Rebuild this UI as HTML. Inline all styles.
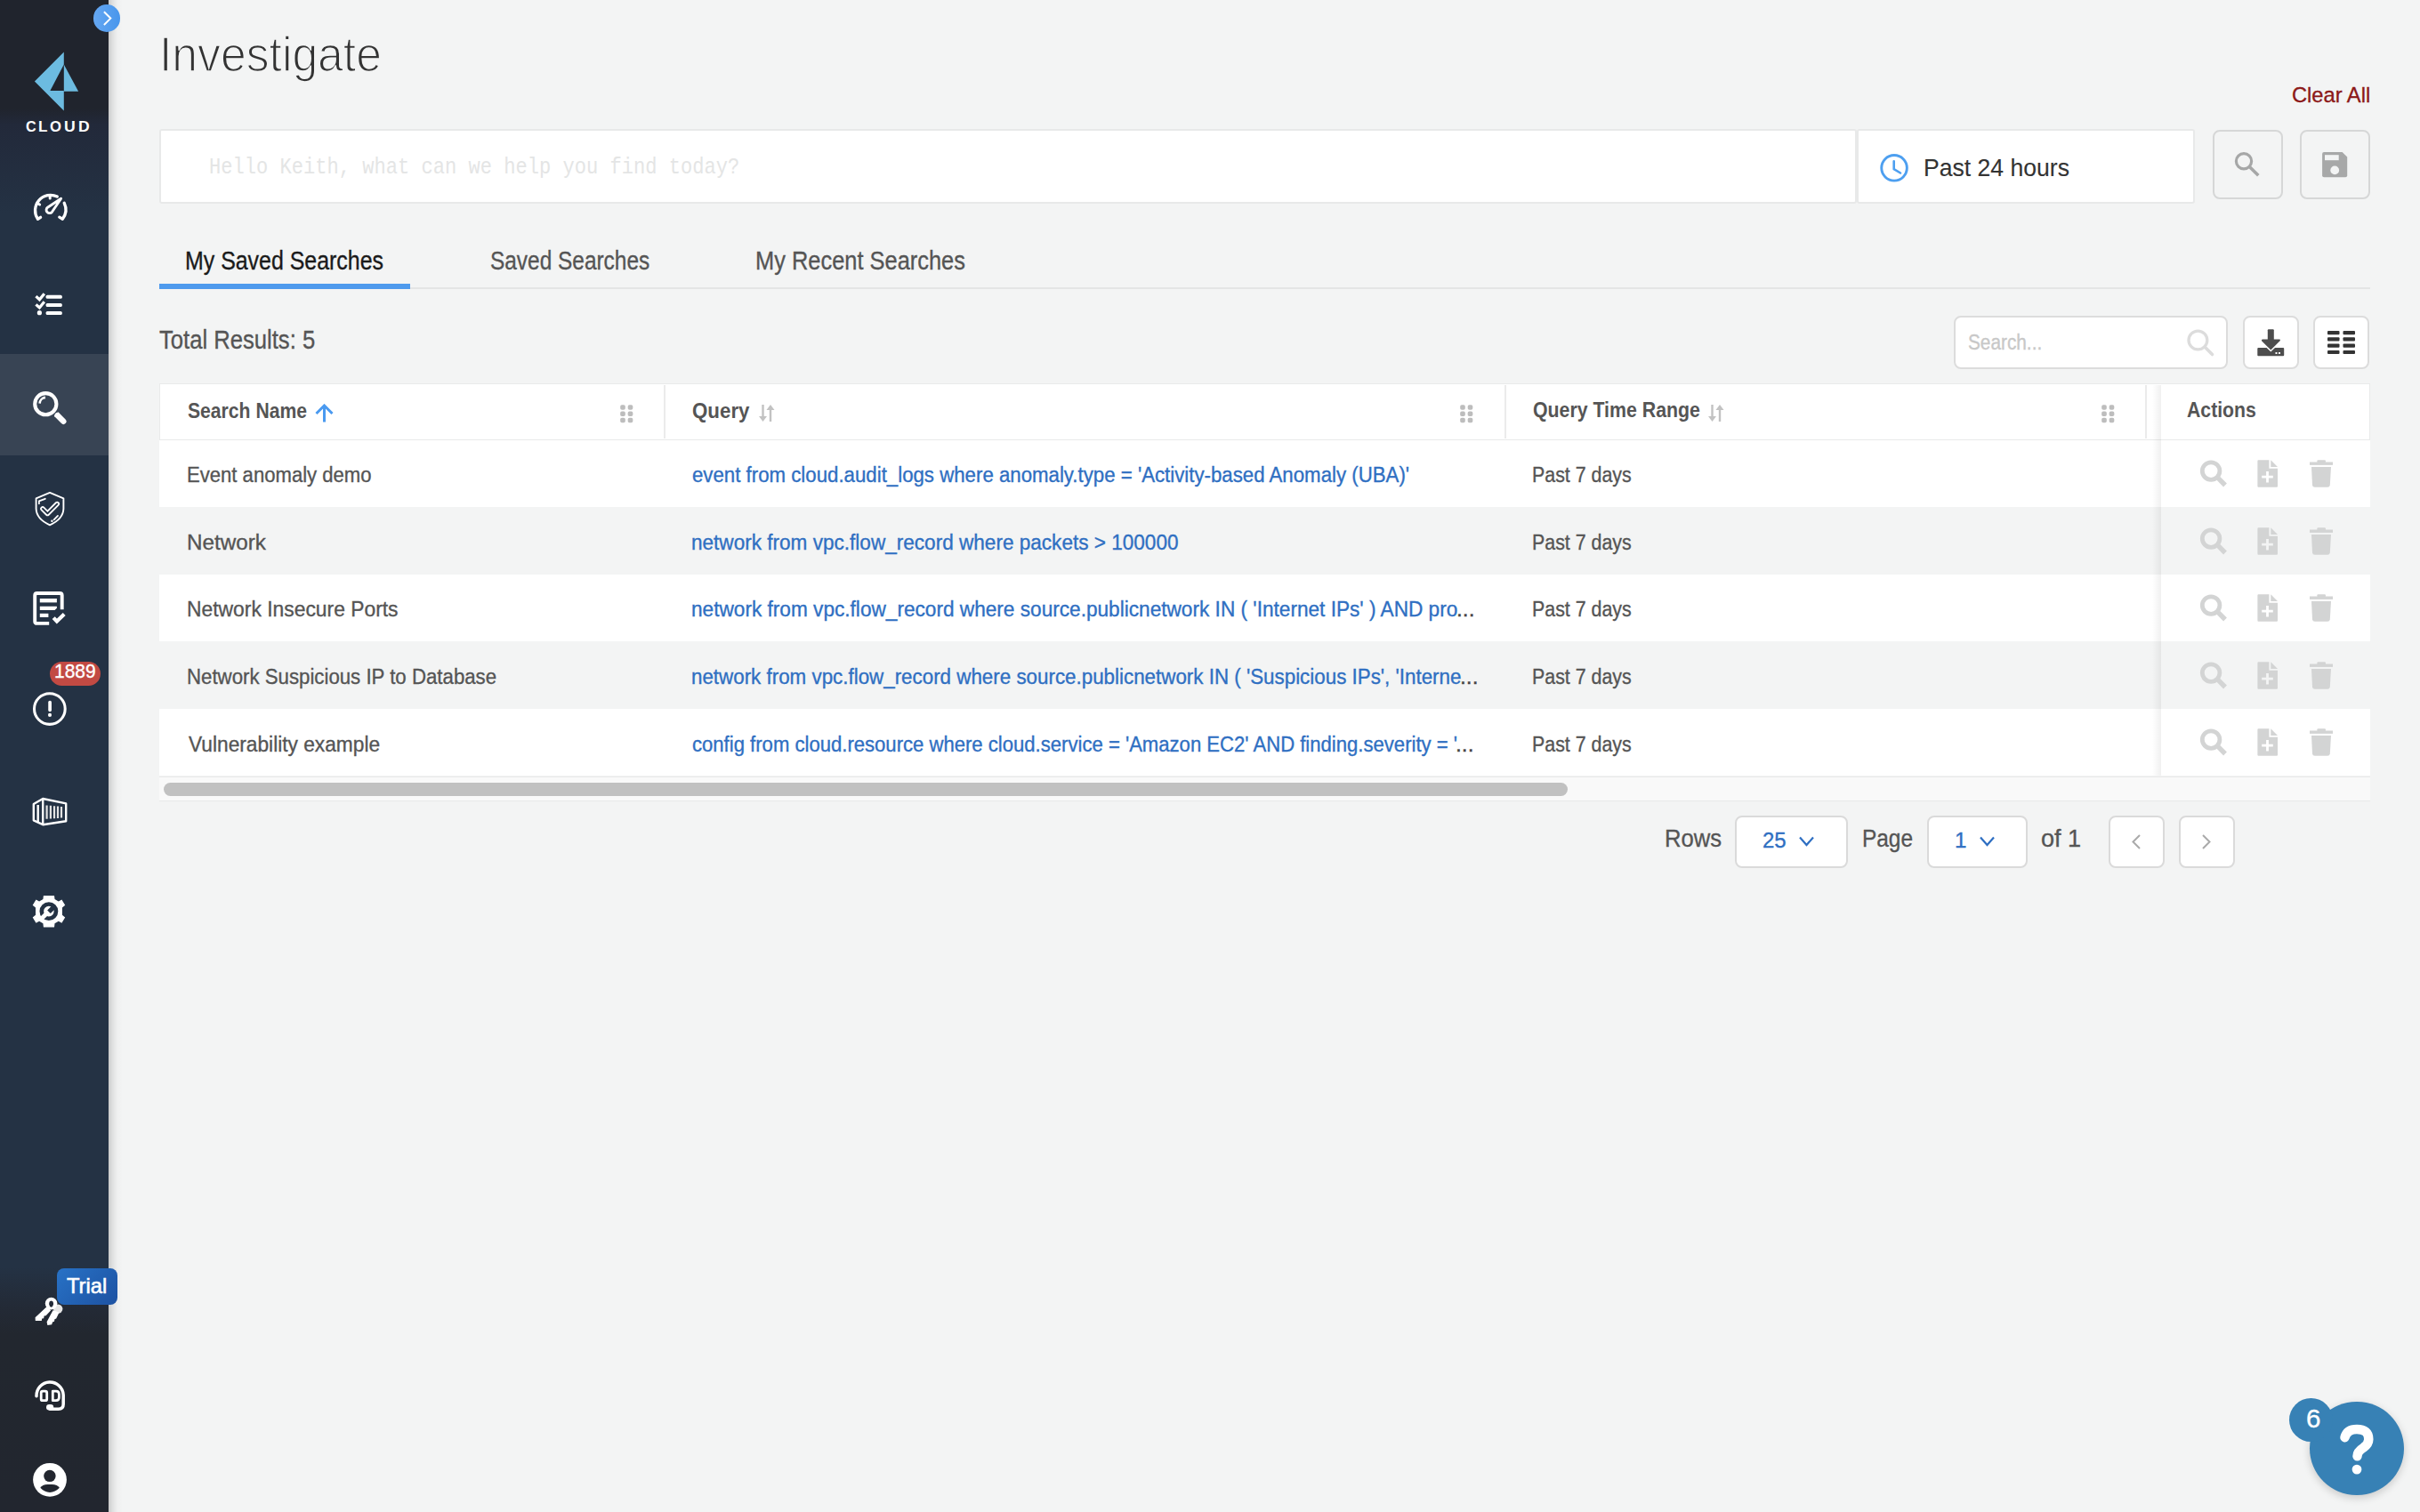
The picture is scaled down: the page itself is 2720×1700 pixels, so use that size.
<!DOCTYPE html><html><head><meta charset="utf-8"><style>
html,body{margin:0;padding:0;}
body{width:2720px;height:1700px;position:relative;overflow:hidden;background:#f3f4f4;font-family:"Liberation Sans",sans-serif;}
.t{position:absolute;white-space:nowrap;transform-origin:0 0;}
.a{position:absolute;}
</style></head><body>
<div class="a" style="left:0;top:0;width:122px;height:1700px;background:linear-gradient(180deg,#20242d 0px,#20242d 122px,#22293a 140px,#243244 240px,#243244 1425px,#232a36 1470px,#22272f 1500px,#22262f 1700px);"></div>
<div class="a" style="left:122px;top:0;width:16px;height:1700px;background:linear-gradient(90deg,rgba(0,0,0,0.17),rgba(0,0,0,0.09) 25%,rgba(0,0,0,0.02) 60%,rgba(0,0,0,0));"></div>
<div class="a" style="left:0;top:398.4px;width:122px;height:113.5px;background:#384454;"></div>
<div class="a" style="left:105px;top:5.2px;width:30.4px;height:30.4px;border-radius:50%;background:linear-gradient(90deg,#65a7f2,#4896ec);"></div>
<svg class="a" style="left:100px;top:0px" width="40" height="40" viewBox="100 0 40 40"><path d="M116.9 13.2 L124.3 20.6 L116.9 28" fill="none" stroke="#fff" stroke-width="2"/></svg>
<svg class="a" style="left:0;top:0" width="122" height="160" viewBox="0 0 122 160"><path d="M71.8 58.4 L38.9 91.4 L71.8 124.5 L71.8 101.9 L56.4 101.9 L71.8 72.5 Z" fill="#6cbbe0"/><path d="M71.8 72.5 L88.1 102.7 L71.8 102.7 Z" fill="#6cbbe0"/></svg>
<div class="t" style="left:28.65px;top:134.33px;font-size:16.13px;line-height:16.13px;font-family:'Liberation Sans', sans-serif; font-weight:bold;color:#fff;transform:scaleX(1.0031);">C</div>
<div class="t" style="left:43.39px;top:134.33px;font-size:16.13px;line-height:16.13px;font-family:'Liberation Sans', sans-serif; font-weight:bold;color:#fff;transform:scaleX(1.0591);">L</div>
<div class="t" style="left:56.03px;top:134.33px;font-size:16.13px;line-height:16.13px;font-family:'Liberation Sans', sans-serif; font-weight:bold;color:#fff;transform:scaleX(1.0345);">O</div>
<div class="t" style="left:72.04px;top:134.33px;font-size:16.13px;line-height:16.13px;font-family:'Liberation Sans', sans-serif; font-weight:bold;color:#fff;transform:scaleX(1.0950);">U</div>
<div class="t" style="left:87.96px;top:134.33px;font-size:16.13px;line-height:16.13px;font-family:'Liberation Sans', sans-serif; font-weight:bold;color:#fff;transform:scaleX(1.0885);">D</div>
<div class="t" style="left:178.95px;top:33.23px;font-size:55.81px;line-height:55.81px;font-family:'Liberation Sans', sans-serif;color:#333;transform:scaleX(0.9263);-webkit-text-stroke:1.6px #f3f4f4;">Investigate</div>
<div class="t" style="left:2576.12px;top:94.57px;font-size:24.71px;line-height:24.71px;font-family:'Liberation Sans', sans-serif;color:#8c1818;transform:scaleX(0.9587);-webkit-text-stroke:0.35px #8c1818;">Clear All</div>
<div class="a" style="left:178.9px;top:145.1px;width:1908.4px;height:83.5px;background:#fff;border:2px solid #e8e9e9;border-radius:3px;box-sizing:border-box;"></div>
<div class="t" style="left:234.63px;top:175.66px;font-size:25.64px;line-height:25.64px;font-family:'Liberation Mono', monospace;color:#e4e5e5;transform:scaleX(0.8616);">Hello Keith, what can we help you find today?</div>
<div class="a" style="left:2086.6px;top:145.1px;width:380.7px;height:83.5px;background:#fff;border:2px solid #e8e9e9;border-radius:3px;box-sizing:border-box;"></div>
<svg class="a" style="left:2100px;top:160px" width="60" height="55" viewBox="2100 160 60 55"><circle cx="2129.05" cy="188.85" r="14.3" fill="none" stroke="#4d9ff0" stroke-width="2.9"/><path d="M2128.7 181.3 V190.2 L2136 194.5" fill="none" stroke="#4d9ff0" stroke-width="2.6" stroke-linecap="round" stroke-linejoin="round"/></svg>
<div class="t" style="left:2162.27px;top:174.84px;font-size:28.05px;line-height:28.05px;font-family:'Liberation Sans', sans-serif;color:#333;transform:scaleX(0.9473);-webkit-text-stroke:0.1px #333;">Past 24 hours</div>
<div class="a" style="left:2487px;top:146px;width:78.5px;height:78px;border:2px solid #d6d7d7;border-radius:8px;box-sizing:border-box;background:#f3f4f4;"></div>
<div class="a" style="left:2585.2px;top:146px;width:78.5px;height:78px;border:2px solid #d6d7d7;border-radius:8px;box-sizing:border-box;background:#f3f4f4;"></div>
<svg class="a" style="left:2490px;top:150px" width="170" height="75" viewBox="2490 150 170 75"><circle cx="2522" cy="181.2" r="8.6" fill="none" stroke="#a6a7a7" stroke-width="3.2"/><path d="M2528.6 187.8 L2538.3 197.3" stroke="#a6a7a7" stroke-width="3.6"/><path d="M2612.1 171 L2632.6 171 L2638.2 176.6 L2638.2 197.2 Q2638.2 199.2 2636.2 199.2 L2612.1 199.2 Q2610.1 199.2 2610.1 197.2 L2610.1 173 Q2610.1 171 2612.1 171 Z" fill="#a7a8a8"/><rect x="2613" y="174.2" width="15.7" height="6" fill="#f3f4f4"/><circle cx="2624.2" cy="191.4" r="4.9" fill="#f3f4f4"/></svg>
<div class="t" style="left:207.61px;top:277.81px;font-size:29.51px;line-height:29.51px;font-family:'Liberation Sans', sans-serif;color:#1a1a1a;transform:scaleX(0.8447);-webkit-text-stroke:0.35px #1a1a1a;">My Saved Searches</div>
<div class="t" style="left:550.60px;top:277.81px;font-size:29.51px;line-height:29.51px;font-family:'Liberation Sans', sans-serif;color:#555;transform:scaleX(0.8277);-webkit-text-stroke:0.35px #555;">Saved Searches</div>
<div class="t" style="left:848.97px;top:277.81px;font-size:29.51px;line-height:29.51px;font-family:'Liberation Sans', sans-serif;color:#555;transform:scaleX(0.8616);-webkit-text-stroke:0.35px #555;">My Recent Searches</div>
<div class="a" style="left:179px;top:323.2px;width:2484.9px;height:1.8px;background:#e4e5e5;"></div>
<div class="a" style="left:179px;top:318.9px;width:281.6px;height:6.1px;background:#4e9aed;"></div>
<div class="t" style="left:178.89px;top:366.73px;font-size:29.36px;line-height:29.36px;font-family:'Liberation Sans', sans-serif;color:#555;transform:scaleX(0.8727);-webkit-text-stroke:0.35px #555;">Total Results: 5</div>
<div class="a" style="left:2196px;top:355px;width:308px;height:60px;border:2px solid #dcdcdc;border-radius:8px;box-sizing:border-box;background:#fff;"></div>
<div class="t" style="left:2211.66px;top:372.99px;font-size:23.98px;line-height:23.98px;font-family:'Liberation Sans', sans-serif;color:#c8c8c8;transform:scaleX(0.8674);-webkit-text-stroke:0.35px #c8c8c8;">Search...</div>
<svg class="a" style="left:2450px;top:360px" width="50" height="50" viewBox="2450 360 50 50"><circle cx="2470.4" cy="382.5" r="10.4" fill="none" stroke="#dcdcdc" stroke-width="3.3"/><path d="M2478 390 L2486.5 398.5" stroke="#dcdcdc" stroke-width="3.6" stroke-linecap="round"/></svg>
<div class="a" style="left:2521px;top:355px;width:63px;height:60px;border:2px solid #dcdcdc;border-radius:8px;box-sizing:border-box;background:#fff;"></div>
<div class="a" style="left:2600px;top:355px;width:63px;height:60px;border:2px solid #dcdcdc;border-radius:8px;box-sizing:border-box;background:#fff;"></div>
<svg class="a" style="left:2530px;top:365px" width="45" height="40" viewBox="2530 365 45 40"><rect x="2548.8" y="370.2" width="7" height="13" rx="1" fill="#4d4d4d"/><path d="M2543 381.6 L2562.2 381.6 Q2563.5 382 2562.6 383.2 L2552.3 393.4 L2542 383.2 Q2541.6 382 2543 381.6 Z" fill="#4d4d4d"/><path d="M2538.3 391 L2547.6 391 L2552.3 395.6 L2557 391 L2566.2 391 Q2567.2 391 2567.2 392 L2567.2 399.3 Q2567.2 400.3 2566.2 400.3 L2538.3 400.3 Q2537.3 400.3 2537.3 399.3 L2537.3 392 Q2537.3 391 2538.3 391 Z" fill="#4d4d4d"/><rect x="2557.5" y="396" width="2" height="2" fill="#fff"/><rect x="2561" y="396" width="2" height="2" fill="#fff"/></svg>
<svg class="a" style="left:2616px;top:372px" width="32" height="27" viewBox="0 0 32 27"><rect x="0" y="0.0" width="13.5" height="4.2" rx="1" fill="#333"/><rect x="17.5" y="0.0" width="13.5" height="4.2" rx="1" fill="#333"/><rect x="0" y="7.3" width="13.5" height="4.2" rx="1" fill="#333"/><rect x="17.5" y="7.3" width="13.5" height="4.2" rx="1" fill="#333"/><rect x="0" y="14.6" width="13.5" height="4.2" rx="1" fill="#333"/><rect x="17.5" y="14.6" width="13.5" height="4.2" rx="1" fill="#333"/><rect x="0" y="21.9" width="13.5" height="4.2" rx="1" fill="#333"/><rect x="17.5" y="21.9" width="13.5" height="4.2" rx="1" fill="#333"/></svg>
<div class="a" style="left:179.2px;top:430.6px;width:2484.7000000000003px;height:64.3px;background:#fff;border:1.9px solid #e9eaea;box-sizing:border-box;"></div>
<div class="a" style="left:178.7px;top:494.5px;width:2485.2000000000003px;height:75.6px;background:#fff;"></div>
<div class="a" style="left:178.7px;top:570.1px;width:2485.2000000000003px;height:75.6px;background:#f3f4f4;"></div>
<div class="a" style="left:178.7px;top:645.7px;width:2485.2000000000003px;height:75.6px;background:#fff;"></div>
<div class="a" style="left:178.7px;top:721.3px;width:2485.2000000000003px;height:75.6px;background:#f3f4f4;"></div>
<div class="a" style="left:178.7px;top:796.9px;width:2485.2000000000003px;height:75.6px;background:#fff;"></div>
<div class="a" style="left:178.7px;top:872.5px;width:2485.2000000000003px;height:28px;background:#f9f9f9;border-top:1.9px solid #e8e8e8;border-bottom:1.9px solid #e8e9e9;box-sizing:border-box;"></div>
<div class="a" style="left:184px;top:880px;width:1578px;height:15px;border-radius:8px;background:#c1c1c1;"></div>
<div class="a" style="left:746px;top:433px;width:2px;height:60px;background:#ebebeb;"></div>
<div class="a" style="left:1690.5px;top:433px;width:2px;height:60px;background:#ebebeb;"></div>
<div class="a" style="left:2411px;top:433px;width:2px;height:60px;background:#ebebeb;"></div>
<div class="a" style="left:2419px;top:433px;width:10px;height:439px;background:linear-gradient(90deg,rgba(0,0,0,0),rgba(0,0,0,0.06));"></div>
<div class="t" style="left:210.97px;top:449.72px;font-size:24.42px;line-height:24.42px;font-family:'Liberation Sans', sans-serif; font-weight:bold;color:#555;transform:scaleX(0.8661);">Search Name</div>
<div class="t" style="left:777.61px;top:449.52px;font-size:24.42px;line-height:24.42px;font-family:'Liberation Sans', sans-serif; font-weight:bold;color:#555;transform:scaleX(0.9141);">Query</div>
<div class="t" style="left:1722.55px;top:449.42px;font-size:24.42px;line-height:24.42px;font-family:'Liberation Sans', sans-serif; font-weight:bold;color:#555;transform:scaleX(0.8729);">Query Time Range</div>
<div class="t" style="left:2457.67px;top:449.42px;font-size:24.42px;line-height:24.42px;font-family:'Liberation Sans', sans-serif; font-weight:bold;color:#555;transform:scaleX(0.8702);">Actions</div>
<svg class="a" style="left:354px;top:454px" width="21" height="21" viewBox="0 0 21 21"><path d="M10.5 20.5 V2.5 M1.5 11 L10.5 2 L19.5 11" fill="none" stroke="#4a9af0" stroke-width="3"/></svg>
<svg class="a" style="left:852.7px;top:454px" width="18" height="21" viewBox="0 0 18 21"><path d="M4.5 1 V17" stroke="#c2c2c2" stroke-width="2.4"/><path d="M0 14 L4.5 20 L9 14 Z" fill="#c2c2c2"/><path d="M13 4 V20" stroke="#c2c2c2" stroke-width="2.4"/><path d="M8.5 7 L13 1 L17.5 7 Z" fill="#c2c2c2"/></svg>
<svg class="a" style="left:1919.7px;top:454px" width="18" height="21" viewBox="0 0 18 21"><path d="M4.5 1 V17" stroke="#c2c2c2" stroke-width="2.4"/><path d="M0 14 L4.5 20 L9 14 Z" fill="#c2c2c2"/><path d="M13 4 V20" stroke="#c2c2c2" stroke-width="2.4"/><path d="M8.5 7 L13 1 L17.5 7 Z" fill="#c2c2c2"/></svg>
<svg class="a" style="left:697px;top:454.5px" width="15" height="21" viewBox="0 0 15 21"><rect x="0.20000000000000018" y="0.20000000000000018" width="5.6" height="5.6" rx="1.8" fill="#bdbdbd"/><rect x="0.20000000000000018" y="7.500000000000001" width="5.6" height="5.6" rx="1.8" fill="#bdbdbd"/><rect x="0.20000000000000018" y="14.7" width="5.6" height="5.6" rx="1.8" fill="#bdbdbd"/><rect x="8.7" y="0.20000000000000018" width="5.6" height="5.6" rx="1.8" fill="#bdbdbd"/><rect x="8.7" y="7.500000000000001" width="5.6" height="5.6" rx="1.8" fill="#bdbdbd"/><rect x="8.7" y="14.7" width="5.6" height="5.6" rx="1.8" fill="#bdbdbd"/></svg>
<svg class="a" style="left:1641px;top:454.5px" width="15" height="21" viewBox="0 0 15 21"><rect x="0.20000000000000018" y="0.20000000000000018" width="5.6" height="5.6" rx="1.8" fill="#bdbdbd"/><rect x="0.20000000000000018" y="7.500000000000001" width="5.6" height="5.6" rx="1.8" fill="#bdbdbd"/><rect x="0.20000000000000018" y="14.7" width="5.6" height="5.6" rx="1.8" fill="#bdbdbd"/><rect x="8.7" y="0.20000000000000018" width="5.6" height="5.6" rx="1.8" fill="#bdbdbd"/><rect x="8.7" y="7.500000000000001" width="5.6" height="5.6" rx="1.8" fill="#bdbdbd"/><rect x="8.7" y="14.7" width="5.6" height="5.6" rx="1.8" fill="#bdbdbd"/></svg>
<svg class="a" style="left:2362px;top:454.5px" width="15" height="21" viewBox="0 0 15 21"><rect x="0.20000000000000018" y="0.20000000000000018" width="5.6" height="5.6" rx="1.8" fill="#bdbdbd"/><rect x="0.20000000000000018" y="7.500000000000001" width="5.6" height="5.6" rx="1.8" fill="#bdbdbd"/><rect x="0.20000000000000018" y="14.7" width="5.6" height="5.6" rx="1.8" fill="#bdbdbd"/><rect x="8.7" y="0.20000000000000018" width="5.6" height="5.6" rx="1.8" fill="#bdbdbd"/><rect x="8.7" y="7.500000000000001" width="5.6" height="5.6" rx="1.8" fill="#bdbdbd"/><rect x="8.7" y="14.7" width="5.6" height="5.6" rx="1.8" fill="#bdbdbd"/></svg>
<div class="t" style="left:210.13px;top:522.29px;font-size:23.98px;line-height:23.98px;font-family:'Liberation Sans', sans-serif;color:#555;transform:scaleX(0.9216);-webkit-text-stroke:0.35px #555;">Event anomaly demo</div>
<div class="t" style="left:777.61px;top:522.29px;font-size:23.98px;line-height:23.98px;font-family:'Liberation Sans', sans-serif;color:#2f6fc2;transform:scaleX(0.9279);-webkit-text-stroke:0.35px #2f6fc2;">event from cloud.audit_logs where anomaly.type = 'Activity-based Anomaly (UBA)'</div>
<div class="t" style="left:1721.79px;top:522.29px;font-size:23.98px;line-height:23.98px;font-family:'Liberation Sans', sans-serif;color:#555;transform:scaleX(0.8919);-webkit-text-stroke:0.35px #555;">Past 7 days</div>
<svg class="a" style="left:2460px;top:505.0px" width="180" height="55" viewBox="2460 505 180 55"><g fill="#d3d4d4"><circle cx="2485.1" cy="529.6" r="9.8" fill="none" stroke="#d3d4d4" stroke-width="4.8"/><path d="M2493.2 537.7 L2501 545.5" stroke="#d3d4d4" stroke-width="5.4"/><path d="M2537.4 518.3 Q2537.4 517.3 2538.4 517.3 L2550.4 517.3 L2550.4 526.7 L2560 526.7 L2560 546.8 Q2560 547.8 2559 547.8 L2538.4 547.8 Q2537.4 547.8 2537.4 546.8 Z"/><path d="M2552.3 517.3 L2560 525 L2552.3 525 Z"/><rect x="2596" y="519.5" width="26" height="3.4"/><rect x="2604.3" y="517.3" width="9.7" height="3" rx="1.2"/><path d="M2598 525 L2620 525 L2618.8 545.3 Q2618.6 547.8 2616 547.8 L2601.8 547.8 Q2599.2 547.8 2599 545.3 Z"/></g><path d="M2548.5 529.9 V542.5 M2542.2 536.2 H2554.8" stroke="#fff" stroke-width="2.8"/></svg>
<div class="t" style="left:209.96px;top:597.89px;font-size:23.98px;line-height:23.98px;font-family:'Liberation Sans', sans-serif;color:#555;transform:scaleX(1.0105);-webkit-text-stroke:0.35px #555;">Network</div>
<div class="t" style="left:777.03px;top:597.89px;font-size:23.98px;line-height:23.98px;font-family:'Liberation Sans', sans-serif;color:#2f6fc2;transform:scaleX(0.9415);-webkit-text-stroke:0.35px #2f6fc2;">network from vpc.flow_record where packets &gt; 100000</div>
<div class="t" style="left:1721.79px;top:597.89px;font-size:23.98px;line-height:23.98px;font-family:'Liberation Sans', sans-serif;color:#555;transform:scaleX(0.8919);-webkit-text-stroke:0.35px #555;">Past 7 days</div>
<svg class="a" style="left:2460px;top:580.6px" width="180" height="55" viewBox="2460 505 180 55"><g fill="#d3d4d4"><circle cx="2485.1" cy="529.6" r="9.8" fill="none" stroke="#d3d4d4" stroke-width="4.8"/><path d="M2493.2 537.7 L2501 545.5" stroke="#d3d4d4" stroke-width="5.4"/><path d="M2537.4 518.3 Q2537.4 517.3 2538.4 517.3 L2550.4 517.3 L2550.4 526.7 L2560 526.7 L2560 546.8 Q2560 547.8 2559 547.8 L2538.4 547.8 Q2537.4 547.8 2537.4 546.8 Z"/><path d="M2552.3 517.3 L2560 525 L2552.3 525 Z"/><rect x="2596" y="519.5" width="26" height="3.4"/><rect x="2604.3" y="517.3" width="9.7" height="3" rx="1.2"/><path d="M2598 525 L2620 525 L2618.8 545.3 Q2618.6 547.8 2616 547.8 L2601.8 547.8 Q2599.2 547.8 2599 545.3 Z"/></g><path d="M2548.5 529.9 V542.5 M2542.2 536.2 H2554.8" stroke="#f3f4f4" stroke-width="2.8"/></svg>
<div class="t" style="left:210.07px;top:673.49px;font-size:23.98px;line-height:23.98px;font-family:'Liberation Sans', sans-serif;color:#555;transform:scaleX(0.9536);-webkit-text-stroke:0.35px #555;">Network Insecure Ports</div>
<div class="t" style="left:777.03px;top:673.49px;font-size:23.98px;line-height:23.98px;font-family:'Liberation Sans', sans-serif;color:#2f6fc2;transform:scaleX(0.9441);-webkit-text-stroke:0.35px #2f6fc2;">network from vpc.flow_record where source.publicnetwork IN ( 'Internet IPs' ) AND pro</div>
<div class="t" style="left:1636.78px;top:673.49px;font-size:23.98px;line-height:23.98px;font-family:'Liberation Sans', sans-serif;color:#444;transform:scaleX(1.0264);-webkit-text-stroke:0.35px #444;">...</div>
<div class="t" style="left:1721.79px;top:673.49px;font-size:23.98px;line-height:23.98px;font-family:'Liberation Sans', sans-serif;color:#555;transform:scaleX(0.8919);-webkit-text-stroke:0.35px #555;">Past 7 days</div>
<svg class="a" style="left:2460px;top:656.2px" width="180" height="55" viewBox="2460 505 180 55"><g fill="#d3d4d4"><circle cx="2485.1" cy="529.6" r="9.8" fill="none" stroke="#d3d4d4" stroke-width="4.8"/><path d="M2493.2 537.7 L2501 545.5" stroke="#d3d4d4" stroke-width="5.4"/><path d="M2537.4 518.3 Q2537.4 517.3 2538.4 517.3 L2550.4 517.3 L2550.4 526.7 L2560 526.7 L2560 546.8 Q2560 547.8 2559 547.8 L2538.4 547.8 Q2537.4 547.8 2537.4 546.8 Z"/><path d="M2552.3 517.3 L2560 525 L2552.3 525 Z"/><rect x="2596" y="519.5" width="26" height="3.4"/><rect x="2604.3" y="517.3" width="9.7" height="3" rx="1.2"/><path d="M2598 525 L2620 525 L2618.8 545.3 Q2618.6 547.8 2616 547.8 L2601.8 547.8 Q2599.2 547.8 2599 545.3 Z"/></g><path d="M2548.5 529.9 V542.5 M2542.2 536.2 H2554.8" stroke="#fff" stroke-width="2.8"/></svg>
<div class="t" style="left:210.12px;top:749.09px;font-size:23.98px;line-height:23.98px;font-family:'Liberation Sans', sans-serif;color:#555;transform:scaleX(0.9276);-webkit-text-stroke:0.35px #555;">Network Suspicious IP to Database</div>
<div class="t" style="left:777.05px;top:749.09px;font-size:23.98px;line-height:23.98px;font-family:'Liberation Sans', sans-serif;color:#2f6fc2;transform:scaleX(0.9330);-webkit-text-stroke:0.35px #2f6fc2;">network from vpc.flow_record where source.publicnetwork IN ( 'Suspicious IPs', 'Interne</div>
<div class="t" style="left:1640.78px;top:749.09px;font-size:23.98px;line-height:23.98px;font-family:'Liberation Sans', sans-serif;color:#444;transform:scaleX(1.0264);-webkit-text-stroke:0.35px #444;">...</div>
<div class="t" style="left:1721.79px;top:749.09px;font-size:23.98px;line-height:23.98px;font-family:'Liberation Sans', sans-serif;color:#555;transform:scaleX(0.8919);-webkit-text-stroke:0.35px #555;">Past 7 days</div>
<svg class="a" style="left:2460px;top:731.8px" width="180" height="55" viewBox="2460 505 180 55"><g fill="#d3d4d4"><circle cx="2485.1" cy="529.6" r="9.8" fill="none" stroke="#d3d4d4" stroke-width="4.8"/><path d="M2493.2 537.7 L2501 545.5" stroke="#d3d4d4" stroke-width="5.4"/><path d="M2537.4 518.3 Q2537.4 517.3 2538.4 517.3 L2550.4 517.3 L2550.4 526.7 L2560 526.7 L2560 546.8 Q2560 547.8 2559 547.8 L2538.4 547.8 Q2537.4 547.8 2537.4 546.8 Z"/><path d="M2552.3 517.3 L2560 525 L2552.3 525 Z"/><rect x="2596" y="519.5" width="26" height="3.4"/><rect x="2604.3" y="517.3" width="9.7" height="3" rx="1.2"/><path d="M2598 525 L2620 525 L2618.8 545.3 Q2618.6 547.8 2616 547.8 L2601.8 547.8 Q2599.2 547.8 2599 545.3 Z"/></g><path d="M2548.5 529.9 V542.5 M2542.2 536.2 H2554.8" stroke="#f3f4f4" stroke-width="2.8"/></svg>
<div class="t" style="left:211.79px;top:824.69px;font-size:23.98px;line-height:23.98px;font-family:'Liberation Sans', sans-serif;color:#555;transform:scaleX(0.9478);-webkit-text-stroke:0.35px #555;">Vulnerability example</div>
<div class="t" style="left:777.62px;top:824.69px;font-size:23.98px;line-height:23.98px;font-family:'Liberation Sans', sans-serif;color:#2f6fc2;transform:scaleX(0.9218);-webkit-text-stroke:0.35px #2f6fc2;">config from cloud.resource where cloud.service = 'Amazon EC2' AND finding.severity = '</div>
<div class="t" style="left:1635.78px;top:824.69px;font-size:23.98px;line-height:23.98px;font-family:'Liberation Sans', sans-serif;color:#444;transform:scaleX(1.0264);-webkit-text-stroke:0.35px #444;">...</div>
<div class="t" style="left:1721.79px;top:824.69px;font-size:23.98px;line-height:23.98px;font-family:'Liberation Sans', sans-serif;color:#555;transform:scaleX(0.8919);-webkit-text-stroke:0.35px #555;">Past 7 days</div>
<svg class="a" style="left:2460px;top:807.4px" width="180" height="55" viewBox="2460 505 180 55"><g fill="#d3d4d4"><circle cx="2485.1" cy="529.6" r="9.8" fill="none" stroke="#d3d4d4" stroke-width="4.8"/><path d="M2493.2 537.7 L2501 545.5" stroke="#d3d4d4" stroke-width="5.4"/><path d="M2537.4 518.3 Q2537.4 517.3 2538.4 517.3 L2550.4 517.3 L2550.4 526.7 L2560 526.7 L2560 546.8 Q2560 547.8 2559 547.8 L2538.4 547.8 Q2537.4 547.8 2537.4 546.8 Z"/><path d="M2552.3 517.3 L2560 525 L2552.3 525 Z"/><rect x="2596" y="519.5" width="26" height="3.4"/><rect x="2604.3" y="517.3" width="9.7" height="3" rx="1.2"/><path d="M2598 525 L2620 525 L2618.8 545.3 Q2618.6 547.8 2616 547.8 L2601.8 547.8 Q2599.2 547.8 2599 545.3 Z"/></g><path d="M2548.5 529.9 V542.5 M2542.2 536.2 H2554.8" stroke="#fff" stroke-width="2.8"/></svg>
<div class="t" style="left:1870.65px;top:928.09px;font-size:28.34px;line-height:28.34px;font-family:'Liberation Sans', sans-serif;color:#555;transform:scaleX(0.9054);-webkit-text-stroke:0.35px #555;">Rows</div>
<div class="a" style="left:1950px;top:917px;width:127px;height:59px;border:2px solid #dadada;border-radius:8px;box-sizing:border-box;background:#fff;"></div>
<div class="t" style="left:1981.30px;top:933.12px;font-size:24.42px;line-height:24.42px;font-family:'Liberation Sans', sans-serif;color:#2f6fc2;transform:scaleX(0.9837);-webkit-text-stroke:0.35px #2f6fc2;">25</div>
<svg class="a" style="left:2022px;top:940px" width="17" height="12" viewBox="0 0 17 12"><path d="M1 1.5 L8.5 10 L16 1.5" fill="none" stroke="#2f6fc2" stroke-width="2.2"/></svg>
<div class="t" style="left:2092.55px;top:928.39px;font-size:28.34px;line-height:28.34px;font-family:'Liberation Sans', sans-serif;color:#555;transform:scaleX(0.8621);-webkit-text-stroke:0.35px #555;">Page</div>
<div class="a" style="left:2166px;top:917px;width:113px;height:59px;border:2px solid #dadada;border-radius:8px;box-sizing:border-box;background:#fff;"></div>
<div class="t" style="left:2196.69px;top:933.53px;font-size:23.69px;line-height:23.69px;font-family:'Liberation Sans', sans-serif;color:#2f6fc2;transform:scaleX(1.0188);-webkit-text-stroke:0.35px #2f6fc2;">1</div>
<svg class="a" style="left:2225px;top:940px" width="17" height="12" viewBox="0 0 17 12"><path d="M1 1.5 L8.5 10 L16 1.5" fill="none" stroke="#2f6fc2" stroke-width="2.2"/></svg>
<div class="t" style="left:2293.92px;top:928.39px;font-size:28.34px;line-height:28.34px;font-family:'Liberation Sans', sans-serif;color:#555;transform:scaleX(0.9557);-webkit-text-stroke:0.35px #555;">of 1</div>
<div class="a" style="left:2369.5px;top:917px;width:63px;height:59px;border:2px solid #dadada;border-radius:8px;box-sizing:border-box;background:#fff;"></div>
<div class="a" style="left:2449px;top:917px;width:63px;height:59px;border:2px solid #dadada;border-radius:8px;box-sizing:border-box;background:#fff;"></div>
<svg class="a" style="left:2395px;top:938px" width="12" height="17" viewBox="0 0 12 17"><path d="M10 1 L2.5 8.5 L10 16" fill="none" stroke="#aaa" stroke-width="2"/></svg>
<svg class="a" style="left:2474px;top:938px" width="12" height="17" viewBox="0 0 12 17"><path d="M2 1 L9.5 8.5 L2 16" fill="none" stroke="#aaa" stroke-width="2"/></svg>
<svg class="a" style="left:0;top:0" width="122" height="1700" viewBox="0 0 122 1700"><g fill="none" stroke="#fff" stroke-width="3.3" stroke-linecap="round" stroke-linejoin="round"><path d="M42.5 246.3 A17.3 17.3 0 0 1 64.3 221 M42.5 246.3 L45.6 244.3"/><path d="M72.2 228.3 A17.3 17.3 0 0 1 70.3 246.3 L66.8 244.2"/><path d="M56.2 220.5 V223" stroke-width="3"/><path d="M42 228.6 L44.6 230" stroke-width="3"/><path d="M68.6 223.3 L53.5 233.2 A3.6 3.6 0 1 0 58.5 238.3 Z" stroke-width="2.9"/></g><g fill="none" stroke="#fff" stroke-width="3.2" stroke-linecap="square" stroke-linejoin="miter"><path d="M41.6 334.2 L44.4 336.8 L48.8 331.4"/><path d="M41.6 343.4 L44.4 346 L48.8 340.6"/></g><circle cx="44.4" cy="351.7" r="2.6" fill="#fff"/><rect x="51.6" y="331.7" width="18.2" height="4.1" rx="1.6" fill="#fff"/><rect x="51.6" y="341" width="18.2" height="4" rx="1.6" fill="#fff"/><rect x="51.6" y="350" width="18.2" height="4" rx="1.6" fill="#fff"/><circle cx="51.3" cy="454.2" r="12.1" fill="none" stroke="#fff" stroke-width="4.1"/><path d="M44.6 453.6 A7 7 0 0 1 51 446.9" fill="none" stroke="#fff" stroke-width="2.6"/><path d="M64.6 467.1 L71.3 473.8" stroke="#fff" stroke-width="6.4" stroke-linecap="round"/><path d="M61.5 468.5 L66 464" stroke="#fff" stroke-width="2"/><g fill="none" stroke="#fff" stroke-linejoin="round" stroke-linecap="round"><path d="M56 553.9 L40.6 560.4 L40.6 572 Q41 583.5 56 590.3 Q71 583.5 71.4 572 L71.4 560.4 Z" stroke-width="1.9"/><path d="M48 572 L53.4 577.4 L64.2 566.6" stroke-width="5.6"/><path d="M48 572 L53.4 577.4 L64.2 566.6" stroke="#243244" stroke-width="2"/><path d="M43.9 566.3 L43.9 563.4 L50.8 560.8" stroke-width="1.8"/><path d="M60.6 584.4 L65 579.9" stroke-width="1.8"/><circle cx="58.4" cy="585.8" r="0.6" fill="#fff" stroke-width="1.2"/></g><path d="M55.2 700.9 L41.7 700.9 Q39.2 700.9 39.2 698.4 L39.2 669.5 Q39.2 667 41.7 667 L67.2 667 Q69.7 667 69.7 669.5 L69.7 685.2" fill="none" stroke="#fff" stroke-width="3.9"/><rect x="44.8" y="673" width="19.1" height="4.4" fill="#fff"/><path d="M44.8 681.8 L63.9 681.8 L63.9 683.8 L61.5 686.1 L44.8 686.1 Z" fill="#fff"/><rect x="44.8" y="689.8" width="9.6" height="4.2" fill="#fff"/><path d="M60.2 694.6 L63.9 698.6 L72.2 690.6" fill="none" stroke="#fff" stroke-width="4.2"/><circle cx="55.85" cy="797" r="17.35" fill="none" stroke="#fff" stroke-width="3.05"/><path d="M56.1 789.5 V798.3" stroke="#fff" stroke-width="3.7" stroke-linecap="round"/><circle cx="56" cy="803.9" r="2.05" fill="#fff"/><g fill="none" stroke="#fff" stroke-width="2.4" stroke-linejoin="round"><path d="M48.2 898 L74.2 903.4 L74.2 923.3 L48.2 927.2 L37.8 922.3 L37.8 904 Z"/><path d="M48.2 898 V927.2 M42.7 905 V924.5"/></g><g stroke="#e2e2e2" stroke-width="2.2"><path d="M52.6 905.5 V920.8 M56.9 905.8 V920.5 M61 906.2 V920.2 M65 906.6 V919.9 M69 907 V919.6"/></g><path d="M48.9 1006.9 L61 1006.9 L61.5 1011 L65.8 1013.4 L69.4 1011.4 L73.2 1017.8 L69.9 1020.5 L69.9 1028.7 L73.2 1031.4 L69.4 1037.8 L65.8 1035.8 L61.5 1038.2 L61 1042.4 L48.9 1042.4 L48.4 1038.2 L44.1 1035.8 L40.5 1037.8 L36.7 1031.4 L40 1028.7 L40 1020.5 L36.7 1017.8 L40.5 1011.4 L44.1 1013.4 L48.4 1011 Z" fill="#fff"/><circle cx="54.9" cy="1024.6" r="8.1" fill="none" stroke="#243244" stroke-width="4.65"/><path d="M52.3 1027.2 L45.5 1034" stroke="#fff" stroke-width="4.8"/><path d="M53.2 1023.4 L56.8 1027 L61.9 1021.9 L58.3 1018.3 Z" fill="#243244"/><g fill="#fff"><circle cx="65.2" cy="1471.6" r="5.2" fill="#e6e6e6"/><circle cx="57.6" cy="1465.6" r="6.8"/><path d="M53 1468.8 L39.6 1481.2 L39.8 1485 L46.8 1485 L47.2 1482.4 L49.2 1482.2 L49.6 1479.6 L51.6 1479.2 L57.2 1473.2 Z"/><path d="M59.5 1473.2 L52.6 1486.2 L53.4 1490 L58.2 1489.2 L59 1486.6 L61 1485.8 L61.4 1483.2 L63.2 1482.6 L66.6 1475.4 Z"/></g><path d="M55.2 1465 Q55.2 1463 57.6 1462.6 Q60 1463 60 1465 L60 1466.5 Q59.5 1469.3 57.6 1469.8 Q55.7 1469.3 55.2 1466.5 Z" fill="#232a38"/><g fill="none" stroke="#fff" stroke-width="3.5" stroke-linecap="round"><path d="M41 1569.8 A15 15 0 0 1 71.2 1568.5 L71.2 1578.8 Q71.2 1584.3 65.7 1584.3 L56 1584.3"/></g><rect x="46.2" y="1564.1" width="6.5" height="10.6" rx="1.8" fill="none" stroke="#fff" stroke-width="2.8"/><path d="M59.3 1564.1 L63 1564.1 Q66.4 1564.1 66.4 1567.5 L66.4 1571.3 Q66.4 1574.7 63 1574.7 L59.3 1574.7 Z" fill="none" stroke="#fff" stroke-width="2.8" stroke-linejoin="round"/><rect x="52" y="1578.9" width="8.2" height="6.5" rx="3.25" fill="#fff"/><circle cx="56" cy="1663.8" r="18.9" fill="#fff"/><circle cx="55.9" cy="1659.4" r="6.7" fill="#22262f"/><path d="M45.3 1672.8 Q47.5 1669 53.5 1669 L58.5 1669 Q64.5 1669 66.9 1672.8 Q62 1677.9 56 1677.9 Q50 1677.9 45.3 1672.8 Z" fill="#22262f"/></svg>
<div class="a" style="left:56px;top:744px;width:56.7px;height:26.8px;border-radius:13.4px;background:#c24a43;"></div>
<div class="t" style="left:61.03px;top:744.90px;font-size:21.37px;line-height:21.37px;font-family:'Liberation Sans', sans-serif;color:#fff;transform:scaleX(0.9805);-webkit-text-stroke:0.35px #fff;">1889</div>
<div class="a" style="left:63.5px;top:1426px;width:68.2px;height:41px;border-radius:8px;background:linear-gradient(135deg,#2872c6,#1d52a2);"></div>
<div class="t" style="left:75.33px;top:1433.67px;font-size:24.71px;line-height:24.71px;font-family:'Liberation Sans', sans-serif;color:#fff;transform:scaleX(0.9606);-webkit-text-stroke:0.6px #fff;">Trial</div>
<div class="a" style="left:2596px;top:1575.5px;width:105.5px;height:105.5px;border-radius:50%;background:#3781b5;box-shadow:0 3px 10px rgba(0,0,0,0.18);"></div>
<div class="a" style="left:2573px;top:1571.5px;width:49px;height:49px;border-radius:50%;background:#3781b5;"></div>
<div class="t" style="left:2591.53px;top:1581.38px;font-size:29.07px;line-height:29.07px;font-family:'Liberation Sans', sans-serif;color:#fff;transform:scaleX(1.0135);-webkit-text-stroke:0.35px #fff;">6</div>
<svg class="a" style="left:2620px;top:1590px" width="60" height="75" viewBox="0 0 60 75"><path d="M15.5 26.2 Q18 17 29 17 Q42.3 17 42.3 28.2 Q42.3 33.5 36.5 37.6 Q29.5 42 29.5 47.2" fill="none" stroke="#fff" stroke-width="10.5" stroke-linecap="round"/><circle cx="29" cy="62.1" r="5.4" fill="#fff"/></svg>
</body></html>
